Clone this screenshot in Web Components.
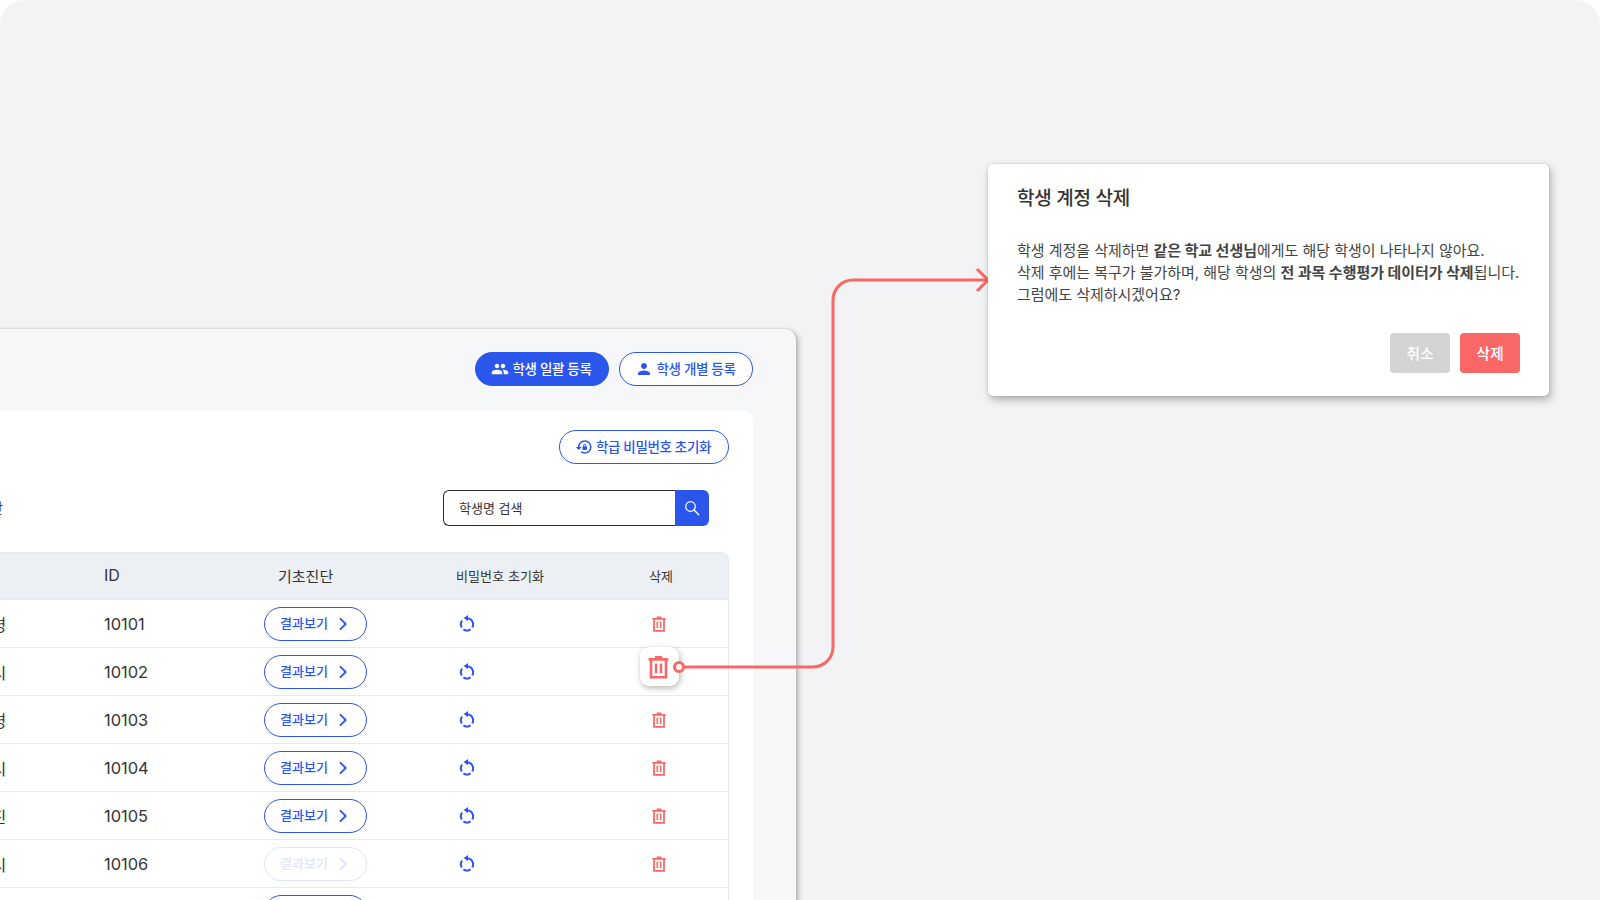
<!DOCTYPE html>
<html lang="ko">
<head>
<meta charset="utf-8">
<title>학생 계정 삭제</title>
<style>
  html, body { margin: 0; background: #fff; }
  body { font-family: Inter, "Noto Sans CJK KR", sans-serif; color: #333; }
</style>
</head>
<body>
<guide-stage>
  <roster-panel>
    <pill-button slot="actions" filled icon="group">학생 일괄 등록</pill-button>
    <pill-button slot="actions" icon="person">학생 개별 등록</pill-button>
    <student-row><span slot="name">김다령</span><span slot="id">10101</span></student-row>
    <student-row><span slot="name">박민시</span><span slot="id">10102</span></student-row>
    <student-row><span slot="name">이서령</span><span slot="id">10103</span></student-row>
    <student-row><span slot="name">최유시</span><span slot="id">10104</span></student-row>
    <student-row><span slot="name">정하진</span><span slot="id">10105</span></student-row>
    <student-row muted><span slot="name">한지시</span><span slot="id">10106</span></student-row>
    <student-row><span slot="name">오세령</span><span slot="id">10107</span></student-row>
  </roster-panel>
  <trash-callout></trash-callout>
  <connector-line></connector-line>
  <confirm-dialog heading="학생 계정 삭제">
    학생 계정을 삭제하면 <b>같은 학교 선생님</b>에게도 해당 학생이 나타나지 않아요.<br>
    삭제 후에는 복구가 불가하며, 해당 학생의 <b>전 과목 수행평가 데이터가 삭제</b>됩니다.<br>
    그럼에도 삭제하시겠어요?
  </confirm-dialog>
</guide-stage>

<script>
const BLUE = '#2b56eb';
const RED = '#f96767';

// Icon shapes, 24 unit box unless the entry says otherwise
const ICONS = {
  group: { box: '0 0 24 24', body: '<path fill="currentColor" d="M16 11c1.66 0 2.99-1.34 2.99-3S17.66 5 16 5c-1.66 0-3 1.34-3 3s1.34 3 3 3zm-8 0c1.66 0 2.99-1.34 2.99-3S9.66 5 8 5C6.34 5 5 6.34 5 8s1.34 3 3 3zm0 2c-2.33 0-7 1.17-7 3.5V19h14v-2.5c0-2.33-4.67-3.5-7-3.5zm8 0c-.29 0-.62.02-.97.05 1.16.84 1.97 1.97 1.97 3.45V19h6v-2.5c0-2.33-4.67-3.5-7-3.5z"/>' },
  person: { box: '0 0 24 24', body: '<path fill="currentColor" d="M12 12c2.21 0 4-1.79 4-4s-1.79-4-4-4-4 1.79-4 4 1.79 4 4 4zm0 2c-2.67 0-8 1.34-8 4v2h16v-2c0-2.66-5.33-4-8-4z"/>' },
  lockReset: { box: '0 0 24 24', body: '<path fill="currentColor" d="M13 3c-4.97 0-9 4.03-9 9H1l4 3.99L9 12H6c0-3.87 3.13-7 7-7s7 3.13 7 7-3.13 7-7 7c-1.51 0-2.91-.49-4.06-1.3l-1.42 1.44C9.04 20.3 10.92 21 13 21c4.97 0 9-4.03 9-9s-4.03-9-9-9zm2 8v-1c0-1.1-.9-2-2-2s-2 .9-2 2v1c-.55 0-1 .45-1 1v3c0 .55.45 1 1 1h4c.55 0 1-.45 1-1v-3c0-.55-.45-1-1-1zm-1 0h-2v-1c0-.55.45-1 1-1s1 .45 1 1v1z"/>' },
  search: { box: '0 0 24 24', body: '<circle cx="10" cy="10" r="6.4" fill="none" stroke="currentColor" stroke-width="1.6"/><path d="M14.8 14.8L21 21" fill="none" stroke="currentColor" stroke-width="1.9" stroke-linecap="round"/>' },
  chevron: { box: '0 0 12 16', body: '<path d="M3.5 2.8l5.2 5.2-5.2 5.2" fill="none" stroke="currentColor" stroke-width="1.8" stroke-linecap="round" stroke-linejoin="round"/>' },
  restart: { box: '0 0 16 18', body: '<path d="M8.5 4.2A6.2 6.2 0 0 1 13.2 13.6M11.6 15.4A6.2 6.2 0 0 1 4.4 15.4M2.8 13.6A6.2 6.2 0 0 1 3.2 6.6" fill="none" stroke="currentColor" stroke-width="2"/><path d="M9 1v6.2L4.6 4.1z" fill="currentColor"/>' },
  trash: { box: '0 0 21 24', body: '<path d="M7 2.2h7M.6 4.4h19.8" fill="none" stroke="currentColor" stroke-width="2.6"/><path d="M3 4.4v17.8h15V4.4" fill="none" stroke="currentColor" stroke-width="2.6"/><path d="M8 8.4v9.8M13 8.4v9.8" fill="none" stroke="currentColor" stroke-width="2.4"/>' }
};

function iconSvg(name, width, height) {
  const icon = ICONS[name];
  return `<svg width="${width}" height="${height}" viewBox="${icon.box}" aria-hidden="true">${icon.body}</svg>`;
}

/**
 * The grey rounded sheet everything sits on.
 */
class GuideStage extends HTMLElement {
  constructor() {
    super();
    this.attachShadow({ mode: 'open' }).innerHTML = `
      <style>
        :host {
          display: block;
          position: relative;
          width: 1600px;
          height: 900px;
          overflow: hidden;
          background: #f2f3f5;
          border-radius: 24px 24px 0 0;
        }
      </style>
      <slot></slot>
    `;
  }
}

/**
 * Rounded pill button, outlined unless it has the filled attribute.
 */
class PillButton extends HTMLElement {
  constructor() {
    super();
    const icon = this.getAttribute('icon');
    this.attachShadow({ mode: 'open' }).innerHTML = `
      <style>
        :host {
          display: inline-flex;
          align-items: center;
          justify-content: center;
          gap: var(--pill-gap, 4px);
          box-sizing: border-box;
          width: var(--pill-width, 134px);
          height: 34px;
          padding-right: 2px;
          border: 1px solid ${BLUE};
          border-radius: 17px;
          background: #fff;
          color: ${BLUE};
          font-size: 13.5px;
          font-weight: 500;
          letter-spacing: -0.35px;
          white-space: nowrap;
        }
        :host([filled]) { background: ${BLUE}; color: #fff; }
        svg { display: block; flex: none; }
        .label { display: block; padding-bottom: 2px; }
      </style>
      ${iconSvg(icon, 18, 18)}<span class="label"><slot></slot></span>
    `;
  }
}

/**
 * Student name search input with its button.
 */
class SearchBox extends HTMLElement {
  constructor() {
    super();
    this.attachShadow({ mode: 'open' }).innerHTML = `
      <style>
        :host { display: flex; width: 266px; height: 36px; }
        .field {
          flex: 1;
          display: flex;
          align-items: center;
          padding: 0 0 2px 15px;
          border: 1px solid #2a2a2a;
          border-right: none;
          border-radius: 6px 0 0 6px;
          background: #fff;
          color: #333;
          font-size: 13px;
        }
        .go {
          flex: none;
          display: flex;
          align-items: center;
          justify-content: center;
          width: 34px;
          border-radius: 0 6px 6px 0;
          background: ${BLUE};
          color: #fff;
        }
        svg { display: block; }
      </style>
      <div class="field">학생명 검색</div>
      <div class="go">${iconSvg('search', 18, 18)}</div>
    `;
  }
}

/**
 * Small pill that opens a diagnosis result.
 */
class ResultButton extends HTMLElement {
  constructor() {
    super();
    this.attachShadow({ mode: 'open' }).innerHTML = `
      <style>
        :host {
          display: inline-flex;
          align-items: center;
          gap: 9px;
          box-sizing: border-box;
          width: 103px;
          height: 34px;
          padding-left: 15px;
          border: 1px solid ${BLUE};
          border-radius: 17px;
          background: #fff;
          color: ${BLUE};
          font-size: 13px;
          font-weight: 500;
          white-space: nowrap;
        }
        :host([muted]) { border-color: #e0e6fb; color: #dfe5fb; }
        svg { display: block; flex: none; }
        span { display: block; padding-bottom: 2px; }
      </style>
      <span>결과보기</span>${iconSvg('chevron', 12, 16)}
    `;
  }
}

/**
 * One table row: name and id are slotted in.
 */
class StudentRow extends HTMLElement {
  constructor() {
    super();
    const muted = this.hasAttribute('muted') ? 'muted' : '';
    this.attachShadow({ mode: 'open' }).innerHTML = `
      <style>
        :host {
          display: grid;
          grid-template-columns: 143px 160px 192px 193px 1fr;
          align-items: center;
          box-sizing: border-box;
          height: 48px;
          border-bottom: 1px solid #e8e9eb;
          color: #333;
          font-size: 16.4px;
        }
        .name { margin-left: 1px; font-size: 16px; white-space: nowrap; }
        .pw { color: ${BLUE}; padding: 0 0 1px 3px; }
        .del { color: ${RED}; padding: 1px 0 0 3px; }
        .pw svg, .del svg { display: block; }
        .result { display: flex; }
      </style>
      <div class="name"><slot name="name"></slot></div>
      <div><slot name="id"></slot></div>
      <div class="result"><result-button ${muted}></result-button></div>
      <div class="pw">${iconSvg('restart', 16, 18)}</div>
      <div class="del">${iconSvg('trash', 14, 16)}</div>
    `;
  }
}

/**
 * Table with a shaded header, rows come in through the slot.
 */
class StudentTable extends HTMLElement {
  constructor() {
    super();
    this.attachShadow({ mode: 'open' }).innerHTML = `
      <style>
        :host {
          display: block;
          box-sizing: border-box;
          border: 1px solid #e8e9eb;
          border-bottom: none;
          border-radius: 8px 8px 0 0;
          background: #fff;
        }
        .head {
          display: grid;
          grid-template-columns: 143px 160px 192px 193px 1fr;
          align-items: center;
          box-sizing: border-box;
          height: 47px;
          padding-bottom: 2px;
          border-bottom: 1px solid #e8e9eb;
          border-radius: 7px 7px 0 0;
          background: #ecf0f4;
          color: #333;
          font-size: 15px;
        }
        .id { font-size: 16px; }
        .diag { padding-left: 14px; }
        .small { font-size: 13px; letter-spacing: 0.1px; }
      </style>
      <div class="head">
        <div></div>
        <div class="id">ID</div>
        <div class="diag">기초진단</div>
        <div class="small">비밀번호 초기화</div>
        <div class="small">삭제</div>
      </div>
      <slot></slot>
    `;
  }
}

/**
 * Class roster window, runs off the left and bottom of the sheet.
 */
class RosterPanel extends HTMLElement {
  constructor() {
    super();
    this.attachShadow({ mode: 'open' }).innerHTML = `
      <style>
        :host {
          display: block;
          position: absolute;
          left: -100px;
          top: 329px;
          width: 896px;
          height: 640px;
          box-sizing: border-box;
          padding: 23px 43px 0 40px;
          border-radius: 11px;
          background: #f6f7f9;
          box-shadow: 0 0 2px rgba(0,0,0,.22), 3px 2px 5px rgba(0,0,0,.22);
        }
        .actions { display: flex; justify-content: flex-end; gap: 10px; }
        .card {
          margin-top: 24px;
          padding: 20px 24px 0 20px;
          height: 560px;
          border-radius: 11px;
          background: #fff;
        }
        .tools { display: flex; justify-content: flex-end; --pill-width: 170px; --pill-gap: 3px; }
        .filter {
          display: flex;
          align-items: center;
          justify-content: space-between;
          margin: 26px 20px 26px 0;
        }
        .klass { margin-left: -11px; padding-bottom: 2px; color: #333; font-size: 14px; white-space: nowrap; }
      </style>
      <div class="actions"><slot name="actions"></slot></div>
      <div class="card">
        <div class="tools"><pill-button icon="lockReset">학급 비밀번호 초기화</pill-button></div>
        <div class="filter">
          <div class="klass">1학년 1반</div>
          <search-box></search-box>
        </div>
        <student-table><slot></slot></student-table>
      </div>
    `;
  }
}

/**
 * Enlarged delete icon the connector starts from.
 */
class TrashCallout extends HTMLElement {
  constructor() {
    super();
    this.attachShadow({ mode: 'open' }).innerHTML = `
      <style>
        :host {
          display: flex;
          align-items: center;
          justify-content: center;
          position: absolute;
          left: 640px;
          top: 647px;
          box-sizing: border-box;
          width: 39px;
          height: 39px;
          padding-right: 2px;
          border-radius: 9px;
          background: #fff;
          color: ${RED};
          box-shadow: 1px 2px 6px rgba(0,0,0,.3);
        }
        svg { display: block; }
      </style>
      ${iconSvg('trash', 21, 24)}
    `;
  }
}

/**
 * Red arrow from the delete icon to the dialog.
 */
class ConnectorLine extends HTMLElement {
  constructor() {
    super();
    this.attachShadow({ mode: 'open' }).innerHTML = `
      <style>
        :host { display: block; position: absolute; left: 0; top: 0; pointer-events: none; }
        svg { display: block; }
      </style>
      <svg width="1600" height="900" viewBox="0 0 1600 900" fill="none" stroke="${RED}" stroke-width="3">
        <path d="M684 667H813a20 20 0 0 0 20-20V300a20 20 0 0 1 20-20H986"/>
        <path d="M977 269l11 11-11 11" stroke-linejoin="miter"/>
        <circle cx="679" cy="667" r="4.5" fill="#fff"/>
      </svg>
    `;
  }
}

/**
 * Confirmation dialog, the message is slotted in.
 */
class ConfirmDialog extends HTMLElement {
  constructor() {
    super();
    this.attachShadow({ mode: 'open' }).innerHTML = `
      <style>
        :host {
          display: block;
          position: absolute;
          left: 988px;
          top: 164px;
          width: 561px;
          height: 232px;
          box-sizing: border-box;
          padding: 23px 29px 0 29px;
          border-radius: 5px;
          background: #fff;
          box-shadow: 0 0 2px rgba(0,0,0,.2), 2px 4px 8px rgba(0,0,0,.28);
        }
        h2 {
          margin: 0;
          color: #333;
          font-size: 19px;
          line-height: 24px;
          font-weight: 500;
          letter-spacing: -0.25px;
        }
        .message {
          margin-top: 29px;
          color: #444;
          font-size: 15px;
          line-height: 22px;
          letter-spacing: -0.03px;
          white-space: nowrap;
        }
        .buttons { display: flex; justify-content: flex-end; gap: 10px; margin-top: 27px; }
        .btn {
          display: flex;
          align-items: center;
          justify-content: center;
          box-sizing: border-box;
          width: 60px;
          height: 40px;
          padding-bottom: 2px;
          border-radius: 4px;
          color: #fff;
          font-size: 15px;
          font-weight: 500;
        }
        .cancel { background: #d4d3d1; }
        .ok { background: ${RED}; }
      </style>
      <h2>${this.getAttribute('heading')}</h2>
      <div class="message"><slot></slot></div>
      <div class="buttons">
        <div class="btn cancel">취소</div>
        <div class="btn ok">삭제</div>
      </div>
    `;
  }
}

customElements.define('guide-stage', GuideStage);
customElements.define('pill-button', PillButton);
customElements.define('search-box', SearchBox);
customElements.define('result-button', ResultButton);
customElements.define('student-row', StudentRow);
customElements.define('student-table', StudentTable);
customElements.define('roster-panel', RosterPanel);
customElements.define('trash-callout', TrashCallout);
customElements.define('connector-line', ConnectorLine);
customElements.define('confirm-dialog', ConfirmDialog);
</script>
</body>
</html>
